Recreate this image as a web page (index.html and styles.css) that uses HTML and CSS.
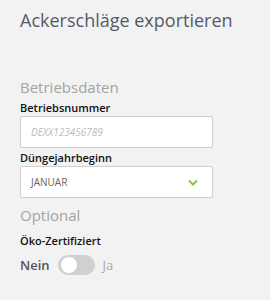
FILE: index.html
```html
<!DOCTYPE html>
<html lang="de">
<head>
    <meta charset="UTF-8">
    <title>Ackerschläge exportieren</title>
    <link rel="stylesheet" href="styles.css">
</head>
<body>
    <div class="panel">
        <h1>Ackerschläge exportieren</h1>

        <h2 class="section-title">Betriebsdaten</h2>
        <div class="form-group">
            <label for="betriebsnummer">Betriebsnummer</label>
            <input type="text" id="betriebsnummer" placeholder="DEXX123456789">
        </div>
        <div class="form-group">
            <label for="beginn">Düngejahrbeginn</label>
            <div class="select">
                <span>JANUAR</span>
                <svg class="chevron" width="10" height="7" viewBox="0 0 10 7">
                    <path d="M1 1.5 L5 5.5 L9 1.5" fill="none" stroke="#8cc63f" stroke-width="2"/>
                </svg>
            </div>
        </div>

        <h2 class="section-title optional">Optional</h2>
        <div class="form-group switch-group">
            <label>Öko-Zertifiziert</label>
            <div class="switch-row">
                <span class="switch-label">Nein</span>
                <span class="switch"><span class="knob"></span></span>
                <span class="switch-label off">Ja</span>
            </div>
        </div>
    </div>
</body>
</html>
```

FILE: styles.css
```css
body {
    font-family: "Open Sans", sans-serif;
    background-color: #f2f2f2;
    color: #333;
    margin: 0;
    padding: 0;
}
.panel {
    padding: 6px 20px 0 20px;
}
h1 {
    font-size: 18px;
    font-weight: normal;
    color: #555a66;
    margin: 0;
    line-height: 28px;
    white-space: nowrap;
}
.section-title {
    font-size: 15px;
    font-weight: normal;
    color: #a3a3a3;
    margin: 42px 0 0;
    line-height: 22px;
}
.section-title.optional {
    margin-top: 6px;
}
label {
    display: block;
    font-size: 11px;
    font-weight: 600;
    color: #111;
    line-height: 16px;
    margin-top: 2px;
}
.switch-group label {
    margin-top: 7px;
}
input[type="text"],
.select {
    width: 193px;
    height: 32px;
    border: 1px solid #cfcfcf;
    border-radius: 2px;
    background: #fff;
    box-sizing: border-box;
    padding: 0 10px;
    font-family: inherit;
    font-size: 10px;
}
input[type="text"]::placeholder {
    color: #bbb;
    font-style: italic;
}
.select {
    display: flex;
    align-items: center;
    justify-content: space-between;
    color: #666;
    padding-right: 14px;
}
.switch-row {
    display: flex;
    align-items: center;
    gap: 8px;
    margin-top: 6px;
}
.switch-label {
    font-size: 13px;
    color: #555;
    font-weight: 600;
}
.switch-label.off {
    color: #aaa;
    font-weight: normal;
}
.switch {
    width: 37px;
    height: 20px;
    border-radius: 10px;
    background: #d0d0d0;
    position: relative;
}
.knob {
    position: absolute;
    left: 3px;
    top: 2px;
    width: 16px;
    height: 16px;
    border-radius: 50%;
    background: #fff;
}
```
